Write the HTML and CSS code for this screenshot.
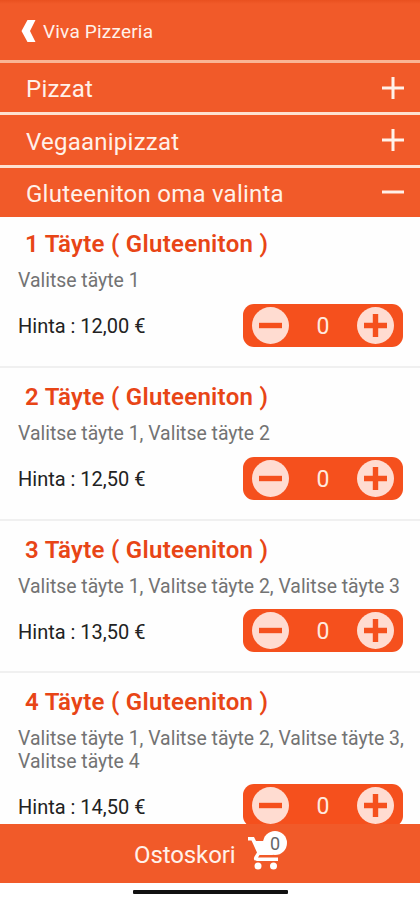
FILE: index.html
```
<!DOCTYPE html>
<html lang="fi">
<head>
<meta charset="utf-8">
<title>Viva Pizzeria</title>
<link rel="stylesheet" href="styles.css">
</head>
<body>
<svg class="defs" width="0" height="0">
  <symbol id="minus" viewBox="0 0 37 37"><circle cx="18.5" cy="18.5" r="18.5" fill="#ffdcd1"/><path d="M7 18.5h23" stroke="#f5501d" stroke-width="5.4"/></symbol>
  <symbol id="plus" viewBox="0 0 37 37"><circle cx="18.5" cy="18.5" r="18.5" fill="#ffdcd1"/><path d="M7 18.5h23M18.500 7v23" stroke="#f5501d" stroke-width="5.4"/></symbol>
</svg>
<div class="app">
  <header class="top">
    <svg class="back" width="16" height="24" viewBox="0 0 16 24"><path d="M6.500 1h8L9 12l5.500 11h-8L.5 12z" fill="#fff"/></svg>
    <span>Viva Pizzeria</span>
  </header>
  <nav>
    <div class="cat"><span>Pizzat</span><svg width="22" height="24" viewBox="0 0 22 24"><path d="M0 12h22M11 1v22" stroke="#fff1e9" stroke-width="3"/></svg></div>
    <div class="cat"><span>Vegaanipizzat</span><svg width="22" height="24" viewBox="0 0 22 24"><path d="M0 12h22M11 1v22" stroke="#fff1e9" stroke-width="3"/></svg></div>
    <div class="cat"><span>Gluteeniton oma valinta</span><svg width="22" height="24" viewBox="0 0 22 24"><path d="M0 12h22" stroke="#fff1e9" stroke-width="3"/></svg></div>
  </nav>
  <main>
    <article class="item">
      <h2>1 Täyte ( Gluteeniton )</h2>
      <p>Valitse täyte 1</p>
      <div class="buy"><span class="price">Hinta : 12,00 €</span><div class="stepper"><svg><use href="#minus"/></svg><span>0</span><svg><use href="#plus"/></svg></div></div>
    </article>
    <article class="item">
      <h2>2 Täyte ( Gluteeniton )</h2>
      <p>Valitse täyte 1, Valitse täyte 2</p>
      <div class="buy"><span class="price">Hinta : 12,50 €</span><div class="stepper"><svg><use href="#minus"/></svg><span>0</span><svg><use href="#plus"/></svg></div></div>
    </article>
    <article class="item">
      <h2>3 Täyte ( Gluteeniton )</h2>
      <p>Valitse täyte 1, Valitse täyte 2, Valitse täyte 3</p>
      <div class="buy"><span class="price">Hinta : 13,50 €</span><div class="stepper"><svg><use href="#minus"/></svg><span>0</span><svg><use href="#plus"/></svg></div></div>
    </article>
    <article class="item">
      <h2>4 Täyte ( Gluteeniton )</h2>
      <p>Valitse täyte 1, Valitse täyte 2, Valitse täyte 3,<br>Valitse täyte 4</p>
      <div class="buy"><span class="price">Hinta : 14,50 €</span><div class="stepper"><svg><use href="#minus"/></svg><span>0</span><svg><use href="#plus"/></svg></div></div>
    </article>
  </main>
  <footer class="cart">
    <span>Ostoskori</span>
    <div class="cart-icon">
      <svg width="40" height="40" viewBox="0 0 40 40"><path d="M0 4h6l2 4h20v10l-3.500 4H11.500l-1.500 2.500H30V28H9q-4.500-.5-2.500-4.500L9 19.500 3.500 7.500H0z" fill="#fff"/><circle cx="10" cy="33" r="3.500" fill="#fff"/><circle cx="25.500" cy="33" r="3.500" fill="#fff"/></svg>
      <span class="count">0</span>
    </div>
  </footer>
  <div class="home"><div class="pill"></div></div>
</div>
</body>
</html>
```

FILE: styles.css
```
* { box-sizing: border-box; }
body { margin: 0; background: #fff; font-family: Roboto, "Liberation Sans", sans-serif; }
.defs { display: block; }
.app { width: 420px; height: 900px; display: flex; flex-direction: column; overflow: hidden; }
.top { flex: none; height: 60px; display: flex; align-items: center; gap: 6px; padding: 3px 0 0 21px; background: linear-gradient(#e9501f, #f15a29 4px); color: #fff1e9; font-size: 19px; letter-spacing: .2px; }
.top .back { flex: none; margin-top: -1px; }
nav { flex: none; height: 157px; }
.cat { height: 52.400px; border-top: 3px solid #fde0d0; background: #f15a29; color: #fff1e9; font-size: 24px; letter-spacing: .24px; display: flex; align-items: center; justify-content: space-between; padding: 3px 16px 0 26px; }
.cat:first-child { border-top-color: #f9b595; }
.cat svg { margin-top: -3px; }
main { flex: none; height: 606.500px; overflow: hidden; background: #fefefe; }
.item { height: 152.600px; border-bottom: 2px solid #f0f0f0; padding: 13px 16px 0 18px; }
.item:first-child { height: 151px; padding-top: 11px; }
.item:last-child { height: 180px; }
h2 { margin: 0 0 0 7px; font-size: 24px; line-height: 32px; font-weight: 600; letter-spacing: .28px; color: #e84516; white-space: nowrap; }
p { margin: 10px 0 0; font-size: 19.400px; line-height: 22.500px; color: #737373; white-space: nowrap; }
.buy { display: flex; justify-content: space-between; align-items: center; margin-top: 11px; }
.price { font-size: 20px; padding-top: 2px; color: #222; }
.stepper { width: 160px; height: 43px; margin-right: 1px; border-radius: 11px; background: #f5501d; display: flex; align-items: center; justify-content: space-between; padding: 0 9px; color: #ffe9df; font-size: 23px; }
.stepper span { padding-top: 2px; }
.stepper svg { width: 37px; height: 37px; }
.cart { flex: none; height: 59.500px; background: #f15a29; color: #fff1e9; font-size: 24px; display: flex; align-items: center; padding-left: 134px; gap: 12px; }
.cart > span { padding-top: 3px; width: 102px; letter-spacing: -.1px; }
.cart-icon { position: relative; width: 40px; height: 40px; }
.count { position: absolute; left: 15px; top: -2px; width: 24px; height: 24px; border-radius: 50%; background: #fff; color: #666; font-size: 18px; line-height: 26px; text-align: center; }
.home { flex: 1; display: flex; justify-content: center; padding-top: 7px; }
.pill { width: 155px; height: 3.500px; border-radius: 1px; background: #111; }
```
